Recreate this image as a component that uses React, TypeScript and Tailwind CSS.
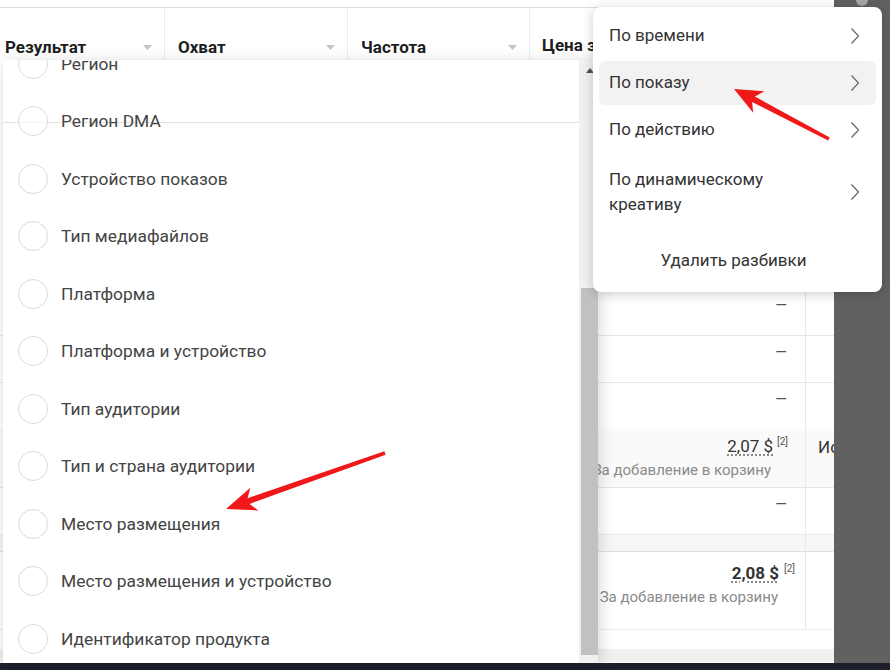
import React from 'react';

const font = { fontFamily: 'Roboto, "Noto Sans", sans-serif' };

const breakdowns = [
  'Регион',
  'Регион DMA',
  'Устройство показов',
  'Тип медиафайлов',
  'Платформа',
  'Платформа и устройство',
  'Тип аудитории',
  'Тип и страна аудитории',
  'Место размещения',
  'Место размещения и устройство',
  'Идентификатор продукта',
];

const columns = [
  { label: 'Результат', width: 'w-[165px]', pl: 'pl-[5px]' },
  { label: 'Охват', width: 'w-[183px]', pl: 'pl-[13px]' },
  { label: 'Частота', width: 'w-[182px]', pl: 'pl-[13px]' },
];

function Caret() {
  return (
    <svg width="9" height="5" viewBox="0 0 9 5" className="shrink-0">
      <path d="M0 0 L9 0 L4.5 5 Z" fill="#c4c4c4" />
    </svg>
  );
}

function Chevron() {
  return (
    <svg width="10" height="18" viewBox="0 0 10 18" className="shrink-0">
      <path d="M1.5 1.5 L8.5 9 L1.5 16.5" fill="none" stroke="#6b6b6b" strokeWidth="1.3" />
    </svg>
  );
}

// arrow polygon: tip, tail, head length, head half width, shaft widths
function arrowPoints(tip: [number, number], tail: [number, number], head = 30, half = 12, wNeck = 6, wTail = 3) {
  const dx = tail[0] - tip[0];
  const dy = tail[1] - tip[1];
  const len = Math.hypot(dx, dy);
  const ux = dx / len;
  const uy = dy / len;
  const nx = -uy;
  const ny = ux;
  const bx = tip[0] + ux * head;
  const by = tip[1] + uy * head;
  const neckX = tip[0] + ux * (head - 6);
  const neckY = tip[1] + uy * (head - 6);
  const pts = [
    [tip[0], tip[1]],
    [bx + nx * half, by + ny * half],
    [neckX + nx * wNeck / 2, neckY + ny * wNeck / 2],
    [tail[0] + nx * wTail / 2, tail[1] + ny * wTail / 2],
    [tail[0] - nx * wTail / 2, tail[1] - ny * wTail / 2],
    [neckX - nx * wNeck / 2, neckY - ny * wNeck / 2],
    [bx - nx * half, by - ny * half],
  ];
  return pts.map(p => `${p[0].toFixed(1)},${p[1].toFixed(1)}`).join(' ');
}

function Dash() {
  return <span className="text-[15px] text-[#555]">—</span>;
}

function TableBody() {
  return (
    <div className="flex flex-col">
      <div className="h-[232px] flex">
        <div className="w-[805px]" />
        <div className="flex-1 border-l border-[#e9e9e9]" />
      </div>
      <div className="h-[44px] flex border-b border-[#e6e6e6]">
        <div className="w-[805px] flex justify-end pr-[18px] pt-[2px]"><Dash /></div>
        <div className="flex-1 border-l border-[#e9e9e9]" />
      </div>
      <div className="h-[47px] flex border-b border-[#e6e6e6]">
        <div className="w-[805px] flex justify-end pr-[18px] pt-[5px]"><Dash /></div>
        <div className="flex-1 border-l border-[#e9e9e9]" />
      </div>
      <div className="h-[46px] flex">
        <div className="w-[805px] flex justify-end pr-[18px] pt-[5px]"><Dash /></div>
        <div className="flex-1 border-l border-[#e9e9e9]" />
      </div>
      <div className="h-[59px] flex bg-[#fafafa] border-b border-[#e6e6e6]">
        <div className="w-[805px] flex flex-col items-end pr-[17px] pt-[6px]">
          <div className="flex items-start gap-[4px]">
            <span className="text-[17px] leading-[22px] text-[#333] underline decoration-dotted decoration-[#777] underline-offset-[3px]">2,07 $</span>
            <span className="text-[10px] leading-[14px] text-[#555]">[2]</span>
          </div>
          <span className="text-[15px] leading-[20px] text-[#8a8a8a] mt-[3px] mr-[17px]">За добавление в корзину</span>
        </div>
        <div className="w-[29px] border-l border-[#e9e9e9] pl-[12px] pt-[7px] text-[17px] leading-[22px] text-[#333] overflow-hidden">
          <span className="whitespace-nowrap">Ис</span>
        </div>
      </div>
      <div className="h-[47px] flex border-b border-[#ececec]">
        <div className="w-[805px] flex justify-end pr-[18px] pt-[5px]"><Dash /></div>
        <div className="flex-1 border-l border-[#e9e9e9]" />
      </div>
      <div className="h-[17px] flex bg-[#f6f6f6] border-b border-[#e0e0e0]">
        <div className="w-[805px]" />
        <div className="flex-1 border-l border-[#e9e9e9]" />
      </div>
      <div className="h-[78px] flex border-b border-[#ececec]">
        <div className="w-[805px] flex flex-col items-end pr-[10px] pt-[10px]">
          <div className="flex items-start gap-[5px]">
            <span className="text-[17px] leading-[22px] font-bold text-[#333] underline decoration-dotted decoration-[#777] underline-offset-[3px]">2,08 $</span>
            <span className="text-[10px] leading-[14px] text-[#555]">[2]</span>
          </div>
          <span className="text-[15px] leading-[20px] text-[#8a8a8a] mt-[3px] mr-[17px]">За добавление в корзину</span>
        </div>
        <div className="flex-1 border-l border-[#e9e9e9]" />
      </div>
      <div className="h-[19px]" />
      <div className="h-[13px] bg-[#f0f0f0]" />
    </div>
  );
}

function BreakdownList() {
  return (
    <div className="absolute left-[3px] top-[60px] w-[595px] h-[603px] bg-white shadow-[2px_2px_14px_rgba(0,0,0,0.16)] overflow-hidden">
      <div className="absolute left-0 right-[19px] top-[62px] h-px bg-[#e3e3e3]" />
      <ul className="relative -mt-[25px]">
        {breakdowns.map(name => (
          <li key={name} className="h-[57.5px] flex items-center pl-[15px] gap-[13px]">
            <span className="w-[30px] h-[30px] rounded-full border border-[#dadada] bg-white/60 shrink-0" />
            <span className="text-[17.4px] text-[#444]">{name}</span>
          </li>
        ))}
      </ul>
      <div className="absolute right-0 top-0 bottom-0 w-[19px] bg-[#f1f1f1] flex flex-col items-end">
        <div className="w-[17px] h-[20px] flex items-center justify-center">
          <svg width="8" height="5" viewBox="0 0 8 5">
            <path d="M0 5 L4 0 L8 5 Z" fill="#505050" />
          </svg>
        </div>
        <div className="mt-[208px] w-[17px] h-[367px] bg-[#c1c1c1]" />
      </div>
    </div>
  );
}

function BreakdownMenu() {
  const row = 'flex items-center justify-between pl-[10px] pr-[16px] rounded-md text-[17px] text-[#333]';
  return (
    <div className="absolute left-[593px] top-[7px] w-[289px] h-[285px] rounded-lg bg-white shadow-[0_2px_12px_rgba(0,0,0,0.2)] flex flex-col px-[6px] pt-[7px] gap-[3px]">
      <div className={`${row} h-[44px]`}><span>По времени</span><Chevron /></div>
      <div className={`${row} h-[44px] bg-[#f2f2f2]`}><span>По показу</span><Chevron /></div>
      <div className={`${row} h-[44px]`}><span>По действию</span><Chevron /></div>
      <div className={`${row} h-[73px]`}>
        <span className="leading-[25px]">По динамическому<br />креативу</span>
        <Chevron />
      </div>
      <div className="h-[60px] flex items-center justify-center pr-[8px] text-[17px] text-[#333]">Удалить разбивки</div>
    </div>
  );
}

export default function App() {
  return (
    <div className="relative w-[890px] h-[670px] overflow-hidden bg-white" style={font}>
      <div className="flex flex-col h-full">
        <div className="flex h-[663px]">
          <div className="w-[834px] flex flex-col">
            <div className="h-[8px] border-b border-[#dedede]" />
            <div className="h-[52px] flex">
              {columns.map(c => (
                <div key={c.label} className={`${c.width} ${c.pl} pr-[12px] flex items-end justify-between pb-[2px] border-r border-[#ededed]`}>
                  <span className="text-[17px] leading-[22px] font-bold text-[#1c1e21]">{c.label}</span>
                  <span className="mb-[8px]"><Caret /></span>
                </div>
              ))}
              <div className="flex-1 pl-[12px] flex items-end pb-[2px]">
                <div className="w-[51px] overflow-hidden">
                  <span className="text-[17px] leading-[22px] font-bold text-[#1c1e21] whitespace-nowrap">Цена за результат</span>
                </div>
              </div>
            </div>
            <TableBody />
          </div>
          <div className="flex-1 bg-[#616161] relative">
            <div className="absolute left-[22px] -top-[6px] w-[12px] h-[12px] rounded-full bg-[#a8a8a8]" />
          </div>
        </div>
        <div className="flex-1 bg-[#1e1f2d]" />
      </div>

      <BreakdownList />
      <BreakdownMenu />

      <svg className="absolute inset-0 pointer-events-none" width="890" height="670">
        <polygon points={arrowPoints([734, 89], [829, 139], 28, 12, 6, 3.5)} fill="#f01818" />
        <polygon points={arrowPoints([226, 509], [385, 453], 30, 12, 6, 3.5)} fill="#f01818" />
      </svg>
    </div>
  );
}
